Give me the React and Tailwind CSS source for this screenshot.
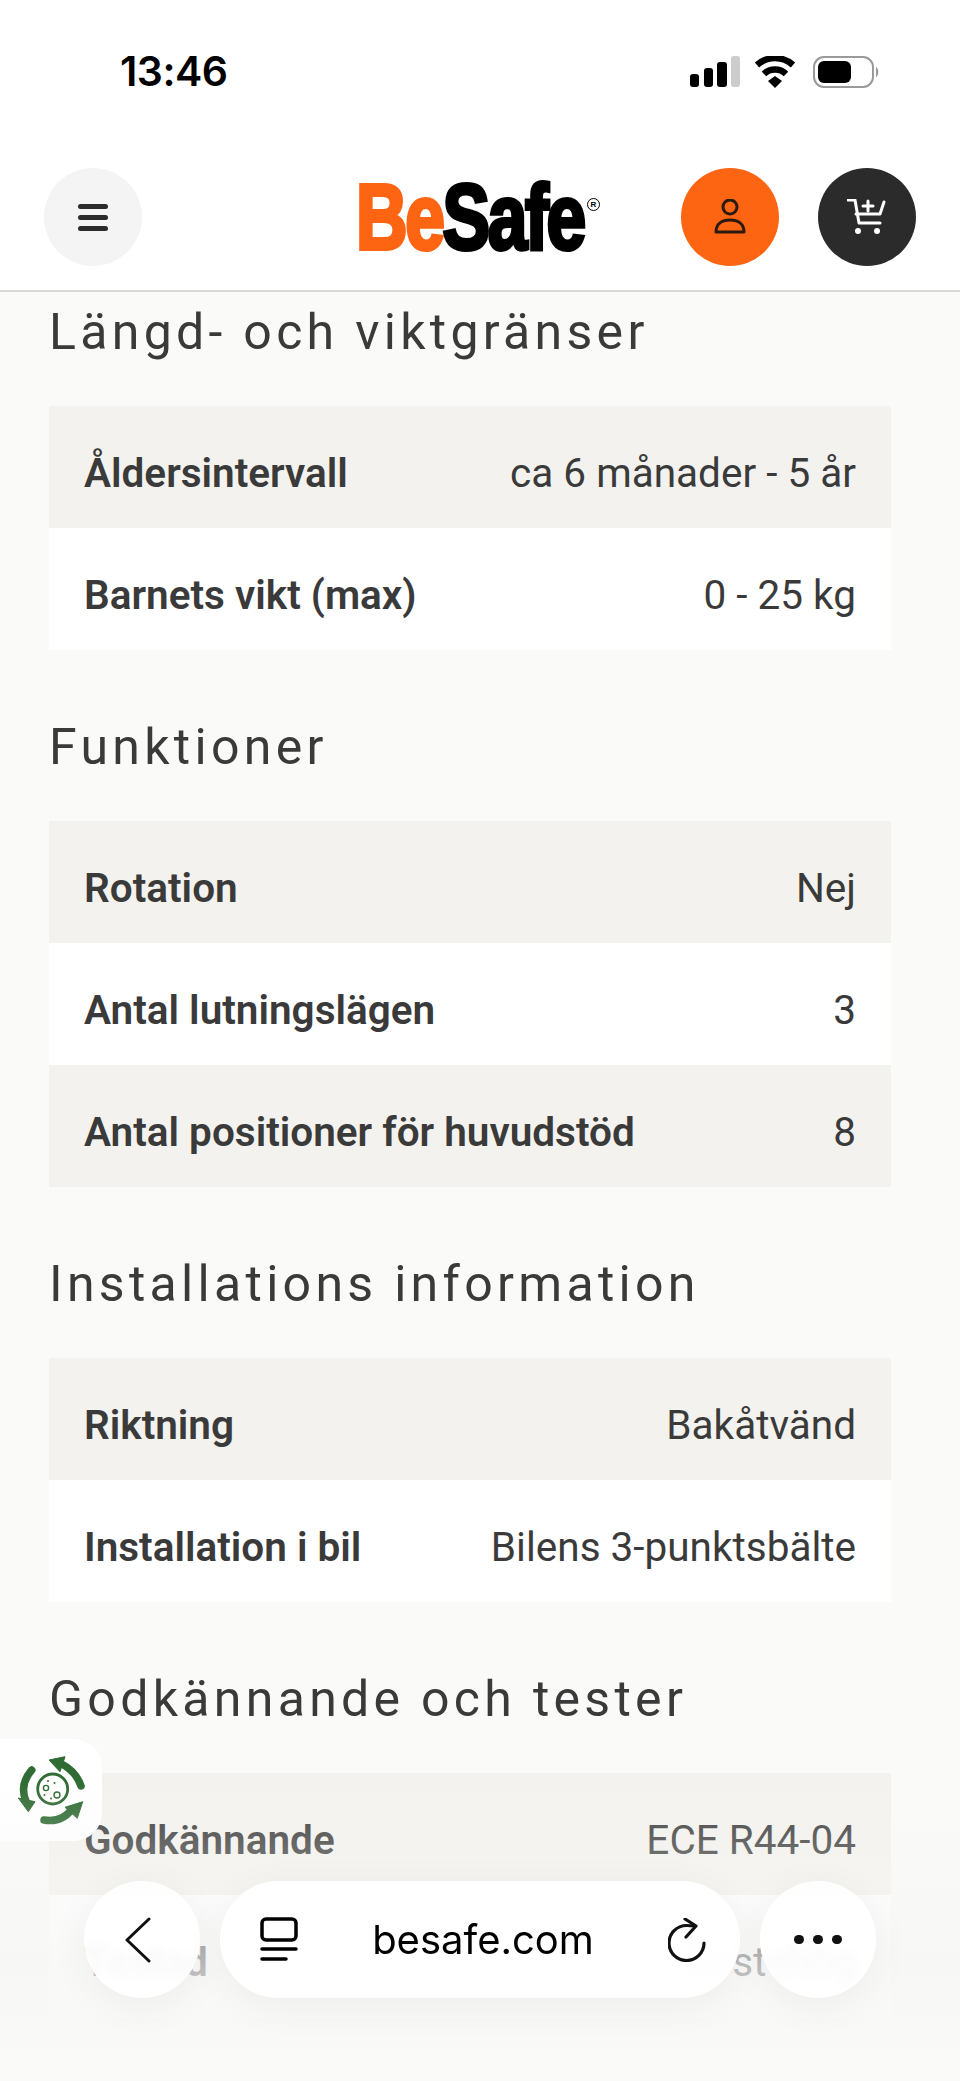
const sections = [
  {
    title: "Längd- och viktgränser",
    rows: [
      ["Åldersintervall", "ca 6 månader - 5 år"],
      ["Barnets vikt (max)", "0 - 25 kg"],
    ],
  },
  {
    title: "Funktioner",
    rows: [
      ["Rotation", "Nej"],
      ["Antal lutningslägen", "3"],
      ["Antal positioner för huvudstöd", "8"],
    ],
  },
  {
    title: "Installations information",
    rows: [
      ["Riktning", "Bakåtvänd"],
      ["Installation i bil", "Bilens 3-punktsbälte"],
    ],
  },
  {
    title: "Godkännande och tester",
    rows: [
      ["Godkännande", "ECE R44-04"],
      ["Testad", "Bestehög"],
    ],
  },
];

function StatusBar() {
  return (
    <div className="h-[112px] pt-[51px] pl-[120px] pr-[78px] flex justify-between items-start">
      <span className="text-[41px] leading-[40px] font-semibold tracking-[-0.5px] text-black font-['Inter',sans-serif]">13:46</span>
      <svg width="192" height="32" viewBox="0 0 192 32" className="mt-[5px]">
        <rect x="0" y="18" width="9" height="13" rx="3" fill="#000" />
        <rect x="14" y="12" width="9" height="19" rx="3" fill="#000" />
        <rect x="27" y="6" width="10" height="25" rx="3" fill="#000" />
        <rect x="41" y="0" width="9" height="31" rx="3" fill="#ccc" />
        <path d="M67 9 A27 27 0 0 1 103 9" fill="none" stroke="#000" strokeWidth="6.5" />
        <path d="M74 18 A16 16 0 0 1 96 18" fill="none" stroke="#000" strokeWidth="6.5" />
        <path d="M78 25 L85 20 L92 25 L85 32 Z" fill="#000" />
        <rect x="124" y="1" width="59" height="30" rx="10" fill="none" stroke="#999" strokeWidth="2" />
        <rect x="128" y="5" width="33" height="22" rx="6" fill="#000" />
        <path d="M186 11 C189 12 189 20 186 21 Z" fill="#999" />
      </svg>
    </div>
  );
}

function Header() {
  return (
    <header className="h-[180px] bg-white border-b-2 border-[#d9d9d9] pt-[56px] pl-[44px] pr-[44px] flex items-start">
      <div className="w-[98px] h-[98px] rounded-full bg-[#f4f4f4] flex flex-col items-center justify-center gap-[6px]">
        <span className="w-[30px] h-[5px] rounded-full bg-[#2b2b2b]" />
        <span className="w-[30px] h-[5px] rounded-full bg-[#2b2b2b]" />
        <span className="w-[30px] h-[5px] rounded-full bg-[#2b2b2b]" />
      </div>
      <div className="ml-[218px] w-[322px] h-[98px] relative">
        <div className="absolute left-[-4px] top-[-6px] origin-left scale-x-[0.775] whitespace-nowrap text-[92px] leading-[110px] font-bold font-['Liberation_Sans',sans-serif] tracking-[-3px] [-webkit-text-stroke:4px_currentColor]">
          <span className="text-[#fd6513]">Be</span>
          <span className="text-black">Safe</span>
        </div>
        <span className="absolute left-[227px] top-[30px] w-[13px] h-[13px] rounded-full border border-black text-[8px] leading-[11px] text-center font-bold text-black font-['Liberation_Sans',sans-serif]">R</span>
      </div>
      <div className="w-[98px] h-[98px] rounded-full bg-[#fd6513] flex items-center justify-center">
        <svg width="32" height="36" viewBox="0 0 32 36" fill="none" stroke="#2b1a10" strokeWidth="3">
          <circle cx="16" cy="8" r="7" />
          <path d="M2 33 C2 25 8 21 16 21 C24 21 30 25 30 33 Z" strokeLinejoin="round" />
        </svg>
      </div>
      <div className="ml-[39px] w-[98px] h-[98px] rounded-full bg-[#2b2b2b] flex items-center justify-center">
        <svg width="40" height="36" viewBox="0 0 40 36" fill="none" stroke="#fff" strokeWidth="3" strokeLinecap="round" strokeLinejoin="round">
          <path d="M1 1 H8 L12 24 H33" />
          <path d="M9 15 H33 L37 3" />
          <path d="M21 2 V12 M16 7 H26" />
          <circle cx="11" cy="32" r="3" fill="#fff" stroke="none" />
          <circle cx="30" cy="32" r="3" fill="#fff" stroke="none" />
        </svg>
      </div>
    </header>
  );
}

function SpecSection({ title, rows }) {
  return (
    <section className="mb-[69px]">
      <h2 className="text-[50px] leading-[56px] tracking-[4.3px] text-[#3a3a3a] font-normal mb-[46px]">{title}</h2>
      <div>
        {rows.map((row, index) => (
          <div
            key={row[0]}
            className={`h-[122px] pt-[12px] px-[35px] flex items-center justify-between text-[40.5px] ${index % 2 === 0 ? "bg-[#f3f2ee]" : "bg-white"}`}
          >
            <span className="font-semibold text-[#3a3a3a]">{row[0]}</span>
            <span className="text-[#3a3a3a]">{row[1]}</span>
          </div>
        ))}
      </div>
    </section>
  );
}

function EcoBadge() {
  return (
    <div className="absolute left-0 top-[1739px] w-[102px] h-[102px] bg-white rounded-r-[28px]">
      <svg width="102" height="102" viewBox="0 0 102 102" fill="none" stroke="#2f6b33">
        <circle cx="52.7" cy="50" r="15" strokeWidth="2.8" />
        <circle cx="46" cy="49" r="2.6" strokeWidth="1.4" />
        <circle cx="57" cy="56" r="3" strokeWidth="1.4" />
        <circle cx="48" cy="42" r="1" fill="#2f6b33" stroke="none" />
        <circle cx="54.5" cy="44" r="1" fill="#2f6b33" stroke="none" />
        <circle cx="44.5" cy="56" r="1" fill="#2f6b33" stroke="none" />
        <circle cx="51" cy="59.5" r="1" fill="#2f6b33" stroke="none" />
        <path d="M60 24 Q76 32 81 47" strokeWidth="7.5" strokeLinecap="round" />
        <path d="M49 21 L65 17.7 L60 32.7 Z" fill="#2f6b33" stroke="#2f6b33" strokeWidth="1" strokeLinejoin="round" />
        <path d="M31.7 31 Q19 46 26 62" strokeWidth="7.5" strokeLinecap="round" />
        <path d="M18.3 59 L35 62.7 L28.3 72.7 Z" fill="#2f6b33" stroke="#2f6b33" strokeWidth="1" strokeLinejoin="round" />
        <path d="M44 81 Q62 84 72 70" strokeWidth="7.5" strokeLinecap="round" />
        <path d="M82.7 62.7 L65 68.3 L77.3 79.3 Z" fill="#2f6b33" stroke="#2f6b33" strokeWidth="1" strokeLinejoin="round" />
      </svg>
    </div>
  );
}

function BrowserBar() {
  return (
    <div className="absolute left-0 right-0 bottom-0 h-[301px] pt-[101px] px-[84px] bg-linear-to-b from-transparent via-[#f6f6f5]/70 via-[62%] to-[#fafaf8]">
      <div className="flex gap-[20px]">
        <div className="w-[116px] h-[117px] pr-[8px] rounded-full bg-white/90 backdrop-blur-[4px] shadow-[0_8px_40px_rgba(0,0,0,0.05)] flex items-center justify-center">
          <svg width="26" height="46" viewBox="0 0 26 46" fill="none" stroke="#111" strokeWidth="3" strokeLinecap="round" strokeLinejoin="round">
            <path d="M24 2 L2 23 L24 44" />
          </svg>
        </div>
        <div className="w-[520px] h-[117px] rounded-full bg-white/95 backdrop-blur-[4px] shadow-[0_8px_40px_rgba(0,0,0,0.05)] flex items-center pl-[40px] pr-[34px] justify-between">
          <svg width="38" height="46" viewBox="0 0 38 46" fill="none" stroke="#000" strokeWidth="3.5" strokeLinecap="round">
            <rect x="2" y="2" width="34" height="21" rx="4" />
            <path d="M2 32 H36 M2 42 H26" />
          </svg>
          <span className="text-[40px] text-black font-['Inter',sans-serif]">besafe.com</span>
          <svg width="38" height="44" viewBox="0 0 38 44" fill="none" stroke="#111" strokeWidth="3.2" strokeLinecap="round" strokeLinejoin="round">
            <path d="M27 8 C24 7.7 21 7.5 18.5 7.5 A17.5 17.5 0 1 0 36 25" />
            <path d="M17 1 L28 8 L18 19" />
          </svg>
        </div>
        <div className="w-[116px] h-[117px] rounded-full bg-white/90 backdrop-blur-[4px] shadow-[0_8px_40px_rgba(0,0,0,0.05)] flex items-center justify-center gap-[9.5px]">
          <span className="w-[9.5px] h-[9.5px] rounded-full bg-[#111]" />
          <span className="w-[9.5px] h-[9.5px] rounded-full bg-[#111]" />
          <span className="w-[9.5px] h-[9.5px] rounded-full bg-[#111]" />
        </div>
      </div>
    </div>
  );
}

export default function App() {
  return (
    <div className="relative w-[960px] h-[2081px] overflow-hidden bg-[#fafaf8] font-['Roboto',sans-serif]">
      <div className="bg-white">
        <StatusBar />
        <Header />
      </div>
      <main className="pl-[49px] pr-[69px] pt-[12px]">
        {sections.map((section) => (
          <SpecSection key={section.title} title={section.title} rows={section.rows} />
        ))}
      </main>
      <EcoBadge />
      <BrowserBar />
    </div>
  );
}
